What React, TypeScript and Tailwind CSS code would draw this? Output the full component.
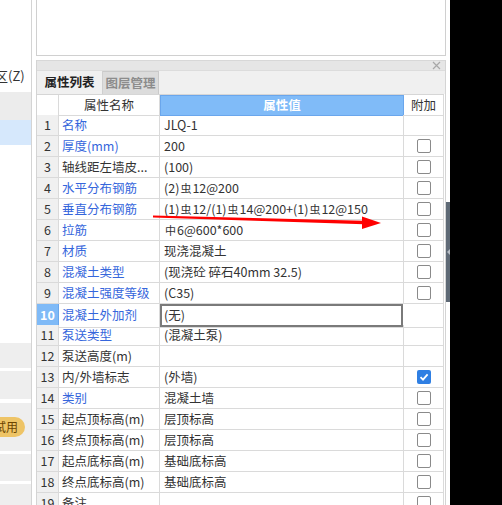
import React from "react";

type Row = [number, string, boolean, string, null | "box" | "checked"];

const rows: Row[] = [
  [1, "名称", true, "JLQ-1", null],
  [2, "厚度(mm)", true, "200", "box"],
  [3, "轴线距左墙皮...", false, "(100)", "box"],
  [4, "水平分布钢筋", true, "(2)虫12@200", "box"],
  [5, "垂直分布钢筋", true, "(1)虫12/(1)虫14@200+(1)虫12@150", "box"],
  [6, "拉筋", true, " 中6@600*600", "box"],
  [7, "材质", true, "现浇混凝土", "box"],
  [8, "混凝土类型", true, "(现浇砼 碎石40mm 32.5)", "box"],
  [9, "混凝土强度等级", true, "(C35)", "box"],
  [10, "混凝土外加剂", true, "(无)", null],
  [11, "泵送类型", true, "(混凝土泵)", null],
  [12, "泵送高度(m)", false, "", null],
  [13, "内/外墙标志", false, "(外墙)", "checked"],
  [14, "类别", true, "混凝土墙", "box"],
  [15, "起点顶标高(m)", false, "层顶标高", "box"],
  [16, "终点顶标高(m)", false, "层顶标高", "box"],
  [17, "起点底标高(m)", false, "基础底标高", "box"],
  [18, "终点底标高(m)", false, "基础底标高", "box"],
  [19, "备注", false, "", "box"],
];

function Value({ text }: { text: string }) {
  const parts = text.split(/(虫|中)/);
  return (
    <>
      {parts.map((p, i) =>
        p === "虫" || p === "中" ? (
          <span key={i} className="text-[11px] px-[1px]">
            {p}
          </span>
        ) : (
          <span key={i}>{p}</span>
        )
      )}
    </>
  );
}

function Check({ kind }: { kind: null | "box" | "checked" }) {
  if (!kind) return null;
  if (kind === "checked")
    return (
      <div className="w-[14px] h-[14px] rounded-[2px] bg-[#2f7fe3] flex items-center justify-center">
        <svg width="10" height="10" viewBox="0 0 10 10">
          <path d="M1.5 5.2 L4 7.6 L8.6 2.4" stroke="white" strokeWidth="1.8" fill="none" />
        </svg>
      </div>
    );
  return <div className="w-[14px] h-[14px] rounded-[2px] border border-[#8a8a8a] bg-white" />;
}

export default function App() {
  return (
    <div className="relative w-[502px] h-[505px] bg-black flex overflow-hidden font-['Noto_Sans_CJK_SC','Liberation_Sans',sans-serif] text-[12.5px] text-[#333]">
      {/* white app area */}
      <div className="w-[450px] h-full bg-white flex">
        {/* left panel */}
        <div className="w-[32px] h-full border-r border-[#d4d4d4] flex flex-col overflow-hidden">
          <div className="h-[66px]" />
          <div className="h-[20px] leading-[20px] whitespace-nowrap -ml-[5px] text-[13px]">区(Z)</div>
          <div className="h-[6px]" />
          <div className="h-[28px] bg-[#ececec]" />
          <div className="h-[25px] bg-[#d6e8fc]" />
          <div className="h-[198px]" />
          <div className="h-[25px] bg-[#eeeeee]" />
          <div className="h-[3px]" />
          <div className="h-[28px] bg-[#eeeeee]" />
          <div className="h-[4px]" />
          <div className="h-[48px] bg-[#eeeeee] flex items-center">
            <div className="-ml-[12px] h-[20px] w-[37px] rounded-full bg-[#eec466] text-[#6b4300] text-[12px] leading-[20px] text-right pr-[7px]">
              试用
            </div>
          </div>
          <div className="h-[3px]" />
          <div className="h-[27px] bg-[#eeeeee]" />
          <div className="h-[3px]" />
          <div className="flex-1 bg-[#eeeeee]" />
        </div>
        <div className="w-[4px]" />
        {/* main */}
        <div className="w-[410px] h-full flex flex-col">
          <div className="h-[56px] border-l border-r border-b border-[#d0d0d0] bg-white" />
          <div className="h-[4px]" />
          <div className="flex-1 flex flex-col border-l border-r border-[#d4d4d4] overflow-hidden">
            {/* title bar */}
            <div className="h-[11px] bg-[#e6e6e6] border-t border-[#d8d8d8] flex justify-end items-center pr-[4px]">
              <svg width="9" height="9" viewBox="0 0 9 9">
                <path d="M1 1 L8 8 M8 1 L1 8" stroke="#a8a8a8" strokeWidth="1.2" />
              </svg>
            </div>
            {/* tabs */}
            <div className="h-[24px] bg-[#f0f0f0] border-t border-[#dcdcdc] flex items-end">
              <div className="h-[23px] w-[66px] border-r border-[#cfcfcf] flex items-center justify-center font-semibold text-[#222] text-[12.5px]">
                属性列表
              </div>
              <div className="h-[23px] w-[56px] bg-[#dcdcdc] border-r border-t border-[#cacaca] flex items-center justify-center text-[#8c8c8c] font-semibold text-[12.5px]">
                图层管理
              </div>
            </div>
            {/* table */}
            <div className="w-[407px] flex flex-col">
              <div className="grid grid-cols-[22px_101px_244px_40px] h-[21px] border-t border-[#d6d6d6]">
                <div className="border-r border-b border-[#dadada] bg-white" />
                <div className="border-r border-b border-[#dadada] flex items-center justify-center">属性名称</div>
                <div className="bg-[#80bbf8] border border-[#6aa6ec] flex items-center justify-center text-white font-semibold">
                  属性值
                </div>
                <div className="border-r border-b border-[#dadada] flex items-center justify-center">附加</div>
              </div>
              {rows.map(([n, name, blue, val, chk]) => (
                <div key={n} className="grid grid-cols-[22px_101px_244px_40px] h-[21px]">
                  <div
                    className={
                      n === 10
                        ? "bg-[#7fbaf7] text-white font-bold border-r border-b border-[#6aa6ec] flex items-center justify-center"
                        : "bg-[#f0f0f0] border-r border-b border-[#dadada] flex items-center justify-center"
                    }
                  >
                    {n}
                  </div>
                  <div
                    className={
                      "border-r border-b border-[#dadada] pl-[3px] flex items-center whitespace-nowrap overflow-hidden " +
                      (blue ? "text-[#3566dc]" : "text-[#333]")
                    }
                  >
                    {name}
                  </div>
                  {n === 10 ? (
                    <div className="border-b border-[#dadada] pr-px">
                      <div className="h-full border-2 border-[#7a7a7a] pl-[2px] flex items-center">
                        {val}
                      </div>
                    </div>
                  ) : (
                    <div className="border-r border-b border-[#dadada] pl-[4px] flex items-center whitespace-nowrap overflow-hidden">
                      <Value text={val} />
                    </div>
                  )}
                  <div className="border-r border-b border-[#dadada] flex items-center justify-center">
                    <Check kind={chk} />
                  </div>
                </div>
              ))}
            </div>
          </div>
        </div>
      </div>
      {/* splitter strip */}
      <div className="absolute left-[446px] top-[202px] w-[4px] h-[100px] bg-[#5f6a76] flex items-center justify-center">
        <div className="w-0 h-0 border-y-[3px] border-y-transparent border-r-[3px] border-r-[#b8bec6]" />
      </div>
      {/* red arrow annotation */}
      <svg className="absolute left-0 top-0 pointer-events-none" width="502" height="505">
        <polygon points="153,215.6 153,217.4 364,224.2 364,220.8" fill="#ff0000" />
        <polygon points="362,216.5 381,223 362,229" fill="#ff0000" />
      </svg>
    </div>
  );
}
